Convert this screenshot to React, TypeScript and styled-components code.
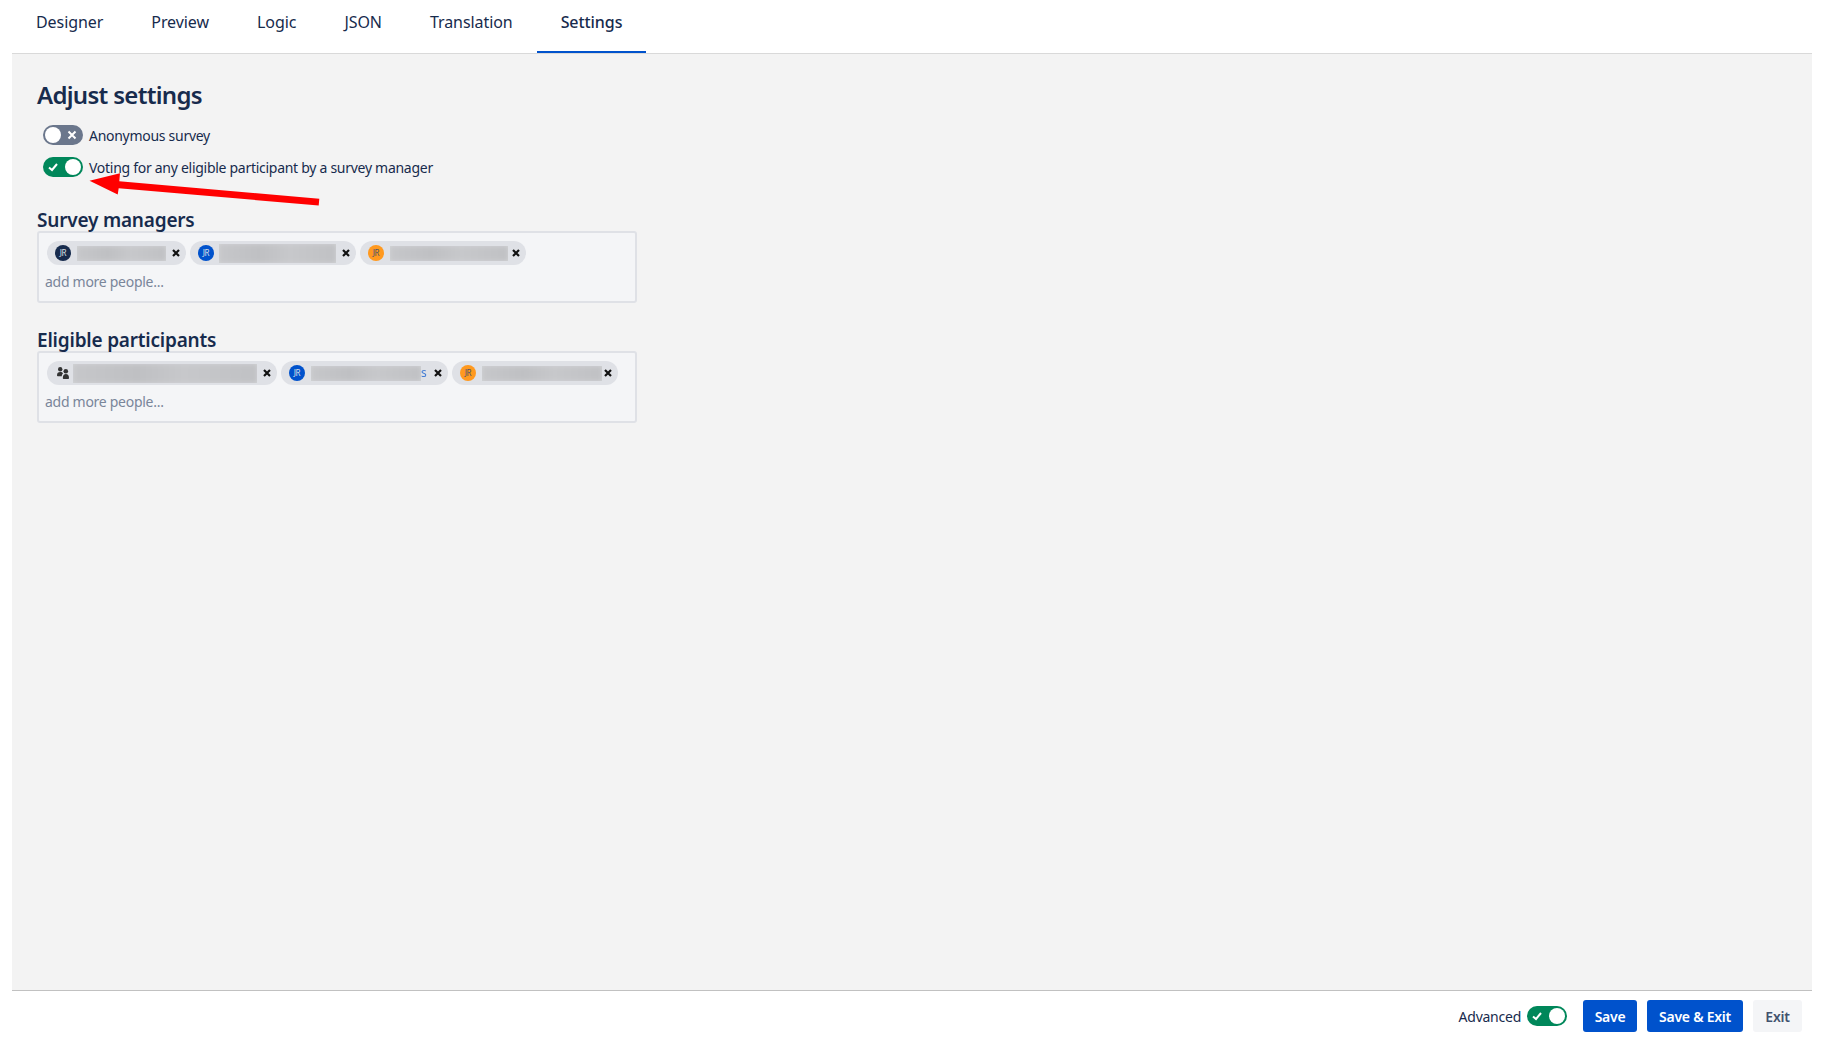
import React from "react";
import styled, { createGlobalStyle } from "styled-components";

const GlobalStyle = createGlobalStyle`
  html, body { margin: 0; padding: 0; background: #fff; }
  body { font-family: "Noto Sans", "Open Sans", sans-serif; color: #172b4d; }
  * { box-sizing: border-box; }
`;

const Page = styled.div`
  position: relative;
  height: 1042px;
  margin: 0 18px 0 12px;
  display: flex;
  flex-direction: column;
`;

const TabBar = styled.nav`
  display: flex;
  height: 53px;
  flex: none;
`;

const Tab = styled.div<{ $active?: boolean }>`
  height: 53px;
  padding: 0 24px 7px;
  display: flex;
  align-items: center;
  font-size: 16px;
  font-weight: ${(p) => (p.$active ? 500 : 400)};
  letter-spacing: -0.07px;
  border-bottom: 2px solid ${(p) => (p.$active ? "#0052cc" : "transparent")};
`;

const Main = styled.main`
  flex: 1;
  background: #f3f3f3;
  border-top: 1px solid #d9d9d9;
  border-bottom: 1px solid #c1c1c1;
  padding: 26px 25px 0;
`;

const Title = styled.h1`
  margin: 0 0 15px;
  font-size: 24px;
  line-height: 30px;
  font-weight: 600;
  letter-spacing: -0.7px;
`;

const ToggleRow = styled.div`
  display: flex;
  align-items: center;
  gap: 6px;
  margin: 0 0 12px 6px;
  font-size: 14px;
  line-height: 20px;
  letter-spacing: -0.28px;
`;

const RowLabel = styled.span`
  position: relative;
  top: 0.5px;
`;

const Track = styled.span<{ $on?: boolean }>`
  position: relative;
  flex: none;
  width: 40px;
  height: 20px;
  border-radius: 10px;
  background: ${(p) => (p.$on ? "#00875a" : "#6b778c")};
  display: flex;
  align-items: center;
  justify-content: ${(p) => (p.$on ? "flex-end" : "flex-start")};
  padding: 0 2px;
`;

const Knob = styled.span`
  width: 16px;
  height: 16px;
  border-radius: 50%;
  background: #fff;
`;

const TrackIcon = styled.svg<{ $on?: boolean }>`
  position: absolute;
  top: 5px;
  left: ${(p) => (p.$on ? "5px" : "24px")};
  width: 10px;
  height: 10px;
  fill: none;
  stroke: #fff;
  stroke-width: 2;
`;

const Section = styled.section`
  margin-top: 30px;
  & + & {
    margin-top: 24px;
  }
`;

const SectionTitle = styled.h2`
  margin: 0;
  padding-top: 1px;
  height: 24px;
  font-size: 19px;
  line-height: 24px;
  font-weight: 600;
  letter-spacing: -0.2px;
`;

const PeopleBox = styled.div`
  width: 600px;
  height: 72px;
  background: #f4f5f7;
  border: 2px solid #dfe1e6;
  border-radius: 3px;
  padding: 8px 6px 0 8px;
`;

const ChipRow = styled.div`
  display: flex;
  gap: 4px;
`;

const Chip = styled.div<{ $width: number }>`
  width: ${(p) => p.$width}px;
  height: 24px;
  border-radius: 12px;
  background: #dfe1e6;
  display: flex;
  align-items: center;
  padding: 0 6px 0 8px;
`;

const Avatar = styled.span<{ $color: string; $dark?: boolean }>`
  flex: none;
  width: 16px;
  height: 16px;
  border-radius: 50%;
  background: ${(p) => p.$color};
  color: ${(p) => (p.$dark ? "#42526e" : "#dfe1e6")};
  font-size: 8px;
  letter-spacing: -0.3px;
  line-height: 16px;
  text-align: center;
`;

const GroupIcon = styled.svg`
  flex: none;
  width: 12px;
  height: 12px;
  margin: 0 0 0 2px;
  fill: #333;
`;

const BlurredName = styled.span<{ $width: number; $tall?: boolean; $group?: boolean }>`
  flex: none;
  width: ${(p) => p.$width}px;
  height: ${(p) => (p.$tall ? 19 : 15)}px;
  margin-left: ${(p) => (p.$group ? 4 : p.$tall ? 5 : 6)}px;
  overflow: hidden;
  background: #d3d4d7;
`;

const BlurredInk = styled.span`
  display: block;
  height: 100%;
  background: linear-gradient(90deg, #c6c7ca, #bfc0c3 35%, #c7c8cb 60%, #c0c1c4);
  filter: blur(2px);
`;

const TrailingLetter = styled.span`
  flex: none;
  font-size: 12px;
  line-height: 16px;
  color: #0052cc;
  opacity: 0.7;
`;

const RemoveIcon = styled.svg`
  flex: none;
  margin-left: auto;
  width: 8px;
  height: 8px;
  stroke: #111;
  stroke-width: 2.2;
  fill: none;
`;

const AddMore = styled.div`
  margin-top: 7px;
  margin-left: -2px;
  font-size: 14px;
  line-height: 20px;
  letter-spacing: -0.28px;
  color: #7a869a;
`;

const Footer = styled.footer`
  flex: none;
  height: 51px;
  display: flex;
  align-items: center;
  justify-content: flex-end;
  gap: 10px;
  padding: 0 10px 1px 0;
`;

const AdvancedGroup = styled.div`
  display: flex;
  align-items: center;
  gap: 6px;
  margin-right: 6px;
  font-size: 14px;
  letter-spacing: -0.25px;
`;

const Button = styled.button<{ $primary?: boolean; $width: number }>`
  width: ${(p) => p.$width}px;
  height: 32px;
  padding: 0;
  border: 0;
  border-radius: 3px;
  font-family: inherit;
  font-size: 14px;
  font-weight: 600;
  letter-spacing: -0.25px;
  background: ${(p) => (p.$primary ? "#0052cc" : "#f4f5f7")};
  color: ${(p) => (p.$primary ? "#fff" : "#42526e")};
`;

const ArrowSvg = styled.svg`
  position: absolute;
  left: 0;
  top: 0;
  width: 340px;
  height: 220px;
  pointer-events: none;
`;

const Toggle = ({ on }: { on?: boolean }) => (
  <Track $on={on}>
    <TrackIcon $on={on} viewBox="0 0 10 10">
      {on ? <path d="M1 5.5 L4 8 L9 2" /> : <path d="M1.5 1.5 L8.5 8.5 M8.5 1.5 L1.5 8.5" />}
    </TrackIcon>
    <Knob />
  </Track>
);

const Remove = () => (
  <RemoveIcon viewBox="0 0 8 8">
    <path d="M1 1 L7 7 M7 1 L1 7" />
  </RemoveIcon>
);

type Person = { chip: number; name: number; tall?: boolean; color?: string; dark?: boolean; group?: boolean; letter?: string };

const managers: Person[] = [
  { chip: 139, name: 89, color: "#172b4d" },
  { chip: 166, name: 117, tall: true, color: "#0052cc" },
  { chip: 166, name: 118, color: "#ff991f", dark: true },
];

const participants: Person[] = [
  { chip: 230, name: 184, tall: true, group: true },
  { chip: 167, name: 110, color: "#0052cc", letter: "s" },
  { chip: 166, name: 120, color: "#ff991f", dark: true },
];

const People = ({ people }: { people: Person[] }) => (
  <PeopleBox>
    <ChipRow>
      {people.map((p, i) => (
        <Chip key={i} $width={p.chip}>
          {p.group ? (
            <GroupIcon viewBox="0 0 12 12">
              <circle cx="3.2" cy="2.2" r="2.2" />
              <path d="M0 8.4 C0 5.8 1.2 4.9 3.2 4.9 C4.6 4.9 5.6 5.3 6 6.4 C5.2 7 4.8 8 4.8 9.2 H0.8 C0.3 9.2 0 8.9 0 8.4 Z" />
              <circle cx="8.8" cy="4.2" r="2.3" />
              <path d="M5.8 11.1 C5.8 8.4 7 7.1 8.9 7.1 C10.8 7.1 12 8.4 12 11.1 C12 11.7 11.7 12 11.2 12 H6.6 C6.1 12 5.8 11.7 5.8 11.1 Z" />
            </GroupIcon>
          ) : (
            <Avatar $color={p.color || "#000"} $dark={p.dark}>
              JR
            </Avatar>
          )}
          <BlurredName $width={p.name} $tall={p.tall} $group={p.group}>
            <BlurredInk />
          </BlurredName>
          {p.letter && <TrailingLetter>{p.letter}</TrailingLetter>}
          <Remove />
        </Chip>
      ))}
    </ChipRow>
    <AddMore>add more people...</AddMore>
  </PeopleBox>
);

export default function App() {
  return (
    <>
      <GlobalStyle />
      <Page>
        <TabBar>
          <Tab>Designer</Tab>
          <Tab>Preview</Tab>
          <Tab>Logic</Tab>
          <Tab>JSON</Tab>
          <Tab>Translation</Tab>
          <Tab $active>Settings</Tab>
        </TabBar>
        <Main>
          <Title>Adjust settings</Title>
          <ToggleRow>
            <Toggle />
            <RowLabel>Anonymous survey</RowLabel>
          </ToggleRow>
          <ToggleRow>
            <Toggle on />
            <RowLabel>Voting for any eligible participant by a survey manager</RowLabel>
          </ToggleRow>
          <Section>
            <SectionTitle>Survey managers</SectionTitle>
            <People people={managers} />
          </Section>
          <Section>
            <SectionTitle>Eligible participants</SectionTitle>
            <People people={participants} />
          </Section>
        </Main>
        <Footer>
          <AdvancedGroup>
            Advanced
            <Toggle on />
          </AdvancedGroup>
          <Button $primary $width={54}>Save</Button>
          <Button $primary $width={96}>Save &amp; Exit</Button>
          <Button $width={49}>Exit</Button>
        </Footer>
      </Page>
      <ArrowSvg viewBox="0 0 340 220">
        <polygon points="89.5,180.7 120,173.3 119.3,181.2 319.3,198.8 318.7,205.5 118.7,188.2 117.7,194.5" fill="#ff0000" />
      </ArrowSvg>
    </>
  );
}
